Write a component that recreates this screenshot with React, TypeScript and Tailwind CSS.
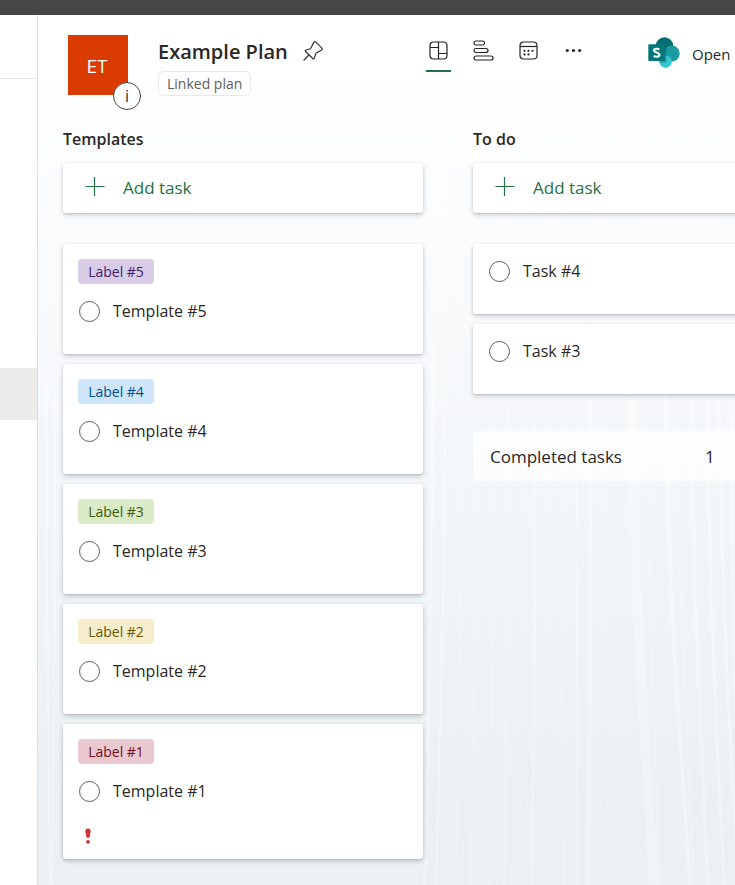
import type { ReactNode } from "react";

type Task = { id: string; title: string; label?: string; tone?: string; urgent?: boolean };

const templates: Task[] = [
  { id: "t5", title: "Template #5", label: "Label #5", tone: "bg-[#d8cce7] text-[#401b6c]" },
  { id: "t4", title: "Template #4", label: "Label #4", tone: "bg-[#cfe6fa] text-[#004e8c]" },
  { id: "t3", title: "Template #3", label: "Label #3", tone: "bg-[#dbebc7] text-[#3b5a08]" },
  { id: "t2", title: "Template #2", label: "Label #2", tone: "bg-[#f6edcd] text-[#6b5700]" },
  { id: "t1", title: "Template #1", label: "Label #1", tone: "bg-[#eac8cf] text-[#750b1c]", urgent: true },
];

const todo: Task[] = [
  { id: "k4", title: "Task #4" },
  { id: "k3", title: "Task #3" },
];

const cardShadow = "shadow-[0_2px_5px_rgba(0,0,0,0.2),0_1px_2px_rgba(0,0,0,0.08)]";

// Start x, drift at the bottom, width and opacity of each light streak.
const streaks = [
  [8, 4, 2, 0.35], [18, -4, 2, 0.3], [395, -8, 4, 0.3], [408, -10, 2, 0.35], [424, -6, 2, 0.2], [440, -8, 4, 0.15],
  [456, -4, 2, 0.2], [470, -4, 3, 0.2], [484, -2, 2, 0.2], [498, -4, 3, 0.25], [510, 2, 2, 0.2], [522, 4, 4, 0.15],
  [538, 2, 3, 0.25], [554, -4, 4, 0.3], [568, 2, 2, 0.2], [592, 24, 10, 0.25], [608, 14, 3, 0.2], [626, 26, 4, 0.35],
  [638, 18, 3, 0.2], [652, 18, 4, 0.25], [668, 18, 3, 0.35], [680, 20, 3, 0.35], [692, 10, 3, 0.3],
];

function Backdrop() {
  return (
    <svg aria-hidden="true" className="absolute inset-0 h-full w-full" viewBox="0 0 697 870" preserveAspectRatio="none">
      {streaks.map(([x, drift, width, opacity]) => (
        <path
          key={x}
          d={`M${x} 0C${x} 300 ${x} 480 ${x + drift / 2} 680L${x + drift} 870`}
          fill="none"
          stroke="#fff"
          strokeWidth={width}
          opacity={opacity}
        />
      ))}
    </svg>
  );
}

function PinIcon() {
  return (
    <svg aria-hidden="true" width="20" height="20" viewBox="0 0 20 20" fill="none" stroke="#323130" strokeWidth="1.2" strokeLinejoin="round" strokeLinecap="round">
      <path d="M10.7 1.6Q11.7 0 13.2 1.3L18.7 6.8Q20 8.2 18.4 9.3L13.6 11.8Q12.8 12.2 12.6 13L11.6 16.6Q11.1 18.2 10 17.7L2.3 10.2Q2 9.4 3.3 9L6.7 8Q7.5 7.8 7.9 7ZM5.9 14L1 19" />
    </svg>
  );
}

function BoardIcon() {
  return (
    <svg aria-hidden="true" width="19" height="19" viewBox="0 0 19 19" fill="none" stroke="#252423" strokeWidth="1.2">
      <rect x="1" y="1" width="17" height="17" rx="3.5" />
      <path d="M9.5 1v17M1 6.5h8.5M9.5 12.5H18" />
    </svg>
  );
}

function ChartIcon() {
  return (
    <svg aria-hidden="true" width="21" height="21" viewBox="0 0 21 21" fill="none" stroke="#252423" strokeWidth="1.2">
      <rect x="1" y="1" width="10.5" height="4" rx="2" />
      <rect x="1" y="8.5" width="14" height="4" rx="2" />
      <rect x="1" y="16" width="19" height="4" rx="2" />
    </svg>
  );
}

function ScheduleIcon() {
  return (
    <svg aria-hidden="true" width="19" height="19" viewBox="0 0 19 19" fill="none" stroke="#252423" strokeWidth="1.2">
      <rect x="1" y="1" width="17" height="17" rx="3.5" />
      <path d="M1 5.5h17" />
      <g fill="#252423" stroke="none">
        <circle cx="5.5" cy="9.8" r="1.1" />
        <circle cx="9.5" cy="9.8" r="1.1" />
        <circle cx="13.5" cy="9.8" r="1.1" />
        <circle cx="5.5" cy="13.4" r="1.1" />
        <circle cx="9.5" cy="13.4" r="1.1" />
      </g>
    </svg>
  );
}

function MoreIcon() {
  return (
    <svg aria-hidden="true" width="17" height="5" viewBox="0 0 17 5" fill="#252423">
      <circle cx="2.3" cy="2.5" r="1.6" />
      <circle cx="8.5" cy="2.5" r="1.6" />
      <circle cx="14.7" cy="2.5" r="1.6" />
    </svg>
  );
}

function SharePointIcon() {
  return (
    <svg aria-hidden="true" className="shrink-0" width="32" height="32" viewBox="0 0 32 32">
      <circle cx="16.5" cy="9" r="8.7" fill="#036c70" />
      <circle cx="23.7" cy="16.5" r="8" fill="#1a9ba1" />
      <circle cx="17.6" cy="24.7" r="6.2" fill="#37c6d0" />
      <path d="M9 8h8.5q.8 0 .8.8V25q0 .8-.8.8h-5.8A6.2 6.2 0 0 1 9 20Z" fill="#000" opacity=".22" />
      <rect x="0.3" y="7.2" width="16.8" height="16.8" rx="1" fill="#03787c" />
      <path d="M11.3 12.6Q10.1 11.8 8.7 11.8C7 11.8 6 12.5 6 13.6 6 15.8 11.5 15.2 11.5 17.8 11.5 19 10.3 19.7 8.5 19.7Q6.9 19.7 5.7 18.9" fill="none" stroke="#fff" strokeWidth="2.1" />
    </svg>
  );
}

function ViewTab({ name, active, children }: { name: string; active?: boolean; children: ReactNode }) {
  return (
    <button
      type="button"
      aria-label={name}
      className={`flex h-11 w-[25px] items-center justify-center border-b-2 pt-[2px] ${active ? "border-[#217346]" : "border-transparent"}`}
    >
      {children}
    </button>
  );
}

function AddTask() {
  return (
    <button type="button" className={`flex h-[50px] w-full items-center gap-[18px] rounded-[3px] bg-white pl-[22px] text-[17px] text-[#217346] ${cardShadow}`}>
      <svg aria-hidden="true" className="mb-[3px]" width="20" height="19" viewBox="0 0 20 19" stroke="#217346" strokeWidth="1.2">
        <path d="M9.5 0v19M0.5 9.5h19" />
      </svg>
      Add task
    </button>
  );
}

function TaskCard({ task }: { task: Task }) {
  return (
    <li className={`rounded-[3px] bg-white px-[15px] pt-[15px] ${task.urgent ? "pb-[14px]" : "pb-[31px]"} ${cardShadow}`}>
      {task.label && (
        <span className={`mb-[15px] flex h-[25px] w-[76px] items-center justify-center rounded-[4px] text-sm ${task.tone}`}>{task.label}</span>
      )}
      <div className="flex h-6 items-center gap-[13px]">
        <input id={task.id} type="checkbox" className="ml-px mt-px size-[21px] appearance-none rounded-full border border-[#605e5c] bg-white" />
        <label htmlFor={task.id} className="text-base leading-6">{task.title}</label>
      </div>
      {task.urgent && (
        <svg role="img" aria-label="Urgent" className="ml-[6px] mt-[24px]" width="8" height="18" viewBox="0 0 8 18" fill="#d13438">
          <path d="M4 1.5C5.9 1.5 6.8 2.7 6.6 4.4L5.8 9.6C5.5 11.5 2.5 11.5 2.2 9.6L1.4 4.4C1.2 2.7 2.1 1.5 4 1.5Z" />
          <ellipse cx="4" cy="14.8" rx="2" ry="1.9" />
        </svg>
      )}
    </li>
  );
}

function Column({ title, tasks, children }: { title: string; tasks: Task[]; children?: ReactNode }) {
  return (
    <section className="w-[360px] shrink-0">
      <h2 className="mb-[13px] text-base leading-[22px] font-semibold">{title}</h2>
      <AddTask />
      <ul className="mt-[31px] flex flex-col gap-[10px]">
        {tasks.map((task) => (
          <TaskCard key={task.id} task={task} />
        ))}
      </ul>
      {children}
    </section>
  );
}

export default function App() {
  return (
    <div className="flex min-h-screen flex-col overflow-hidden bg-white font-['Open_Sans','Noto_Sans',sans-serif] text-[#292827]">
      <div className="h-[15px] bg-[#484644]" />
      <div className="flex grow">
        <aside className="w-[38px] shrink-0 border-r border-[#e1dfdd]">
          <div className="h-16 border-b border-[#e6e6e6]" />
          <div className="mt-[289px] h-[52px] bg-[#edebe9]" />
        </aside>
        <main className="relative min-w-0 grow overflow-hidden bg-linear-to-b from-white from-5% via-[#f4f7fa] via-50% to-[#eaf0f3] to-90%">
          <Backdrop />
          <div className="relative pb-[26px]">
            <header className="flex items-start pt-[20px] pb-[32px] pl-[30px]">
              <div className="relative mr-[30px] flex size-[60px] shrink-0 items-center justify-center bg-[#da3b01] pt-[2px] pr-[2px] text-[19px] text-white">
                ET
                <button type="button" aria-label="Plan information" className="absolute top-[47px] left-[45px] flex size-[28px] items-center justify-center rounded-full border border-[#484644] bg-white text-base text-[#323130]">
                  i
                </button>
              </div>
              <div className="w-[268px] shrink-0 pt-px">
                <div className="flex h-8 items-center gap-[15px]">
                  <h1 className="text-xl font-semibold">Example Plan</h1>
                  <button type="button" aria-label="Pin plan" className="pb-[3px]">
                    <PinIcon />
                  </button>
                </div>
                <span className="mt-[3px] inline-flex h-[25px] items-center rounded-[6px] border border-[#e8e8e8] bg-white px-2 pt-px text-sm text-[#605e5c]">Linked plan</span>
              </div>
              <nav aria-label="Views" className="-mt-[7px] flex shrink-0 gap-5">
                <ViewTab name="Board" active>
                  <BoardIcon />
                </ViewTab>
                <ViewTab name="Charts">
                  <ChartIcon />
                </ViewTab>
                <ViewTab name="Schedule">
                  <ScheduleIcon />
                </ViewTab>
                <ViewTab name="More">
                  <MoreIcon />
                </ViewTab>
              </nav>
              <a href="#sharepoint" className="ml-[62px] flex shrink-0 items-center gap-3 pt-[2px] text-[15px]">
                <SharePointIcon />
                <span className="pt-[2px]">Open</span>
              </a>
            </header>
            <div className="flex items-start gap-[50px] pl-[25px]">
              <Column title="Templates" tasks={templates} />
              <Column title="To do" tasks={todo}>
                <button type="button" className="mt-[37px] flex h-[50px] w-full items-center rounded-[3px] bg-white/70 pt-[2px] pl-[17px] text-[17px]">
                  <span className="w-[215px] text-left">Completed tasks</span>
                  <span>1</span>
                </button>
              </Column>
            </div>
          </div>
        </main>
      </div>
    </div>
  );
}
